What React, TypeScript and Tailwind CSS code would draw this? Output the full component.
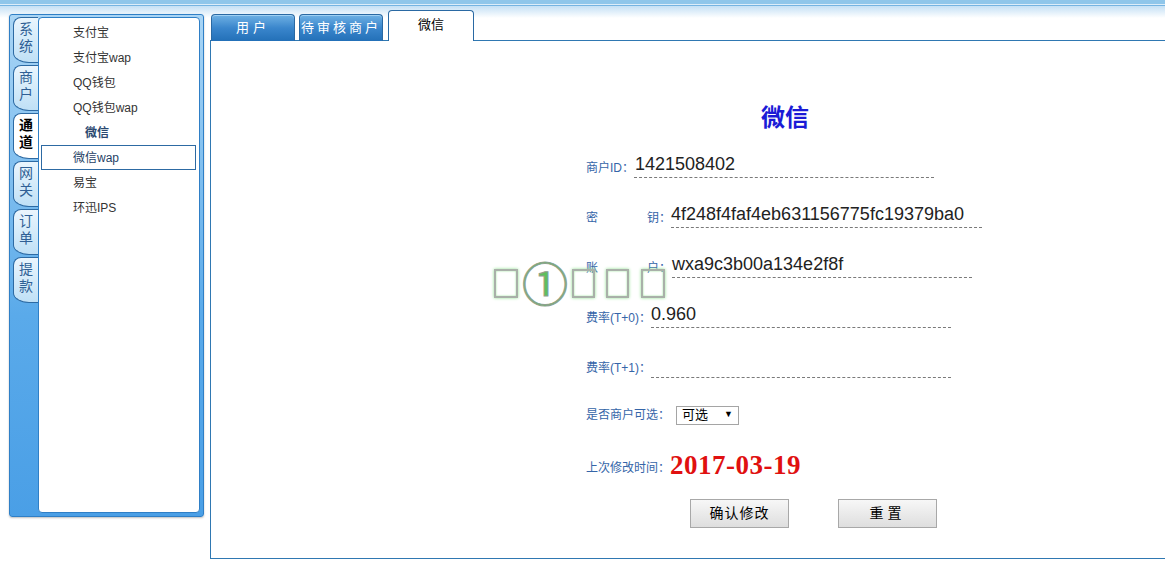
import React from 'react';

const sideTabs = [
  { id: 'xt', chars: ['系', '统'] },
  { id: 'sh', chars: ['商', '户'] },
  { id: 'td', chars: ['通', '道'], active: true },
  { id: 'wg', chars: ['网', '关'] },
  { id: 'dd', chars: ['订', '单'] },
  { id: 'tk', chars: ['提', '款'] },
];

const menu = [
  { id: 'alipay', label: '支付宝' },
  { id: 'alipaywap', label: '支付宝wap' },
  { id: 'qq', label: 'QQ钱包' },
  { id: 'qqwap', label: 'QQ钱包wap' },
  { id: 'wx', label: '微信', current: true },
  { id: 'wxwap', label: '微信wap', selected: true },
  { id: 'yb', label: '易宝' },
  { id: 'ips', label: '环迅IPS' },
];

const font = { fontFamily: '"Liberation Sans", "Noto Sans CJK SC", sans-serif' };

const SideTab: React.FC<{ chars: string[]; active?: boolean }> = ({ chars, active }) => (
  <div
    className={
      'ml-[3px] w-[25px] h-[46px] flex flex-col items-center pt-[3px] border-l border-t border-b border-[#2d6aa3] rounded-tl-[8px] rounded-bl-[16px_10px] ' +
      (active
        ? 'bg-white text-black font-bold'
        : 'bg-[linear-gradient(to_bottom,#eaf5fd,#bfe0f6)] text-[#2f5f95]')
    }
  >
    {chars.map((c) => (
      <span key={c} className="text-[14px] leading-[17px]">
        {c}
      </span>
    ))}
  </div>
);

const LeftPanel: React.FC = () => (
  <div className="ml-[9px] mt-[14px] w-[195px] h-[503px] border border-[#2f7fc6] rounded-[3px] flex bg-[linear-gradient(to_bottom,#a9d5f5,#5aaaea_60%,#4a9fe6)] shadow-[0_1px_2px_rgba(0,0,0,0.25)]">
    <div className="w-[28px] pt-[2px] flex flex-col gap-[2px]">
      {sideTabs.map((t) => (
        <SideTab key={t.id} chars={t.chars} active={t.active} />
      ))}
    </div>
    <div className="mt-[2px] mb-[3px] mr-[3px] flex-1 bg-white border border-[#2f7fc6] rounded-[4px] pt-[2px] pl-[2px] pr-[3px]">
      {menu.map((m) => (
        <div
          key={m.id}
          className={
            'h-[25px] flex items-center text-[12px] ' +
            (m.selected ? 'border border-[#2d6aa3] h-[24px] pl-[31px] text-[#1f3f66]' : 'pl-[32px] ') +
            (m.current ? 'pl-[44px] font-bold text-[#2a4870]' : '') +
            (!m.selected && !m.current ? 'text-[#333]' : '')
          }
        >
          {m.label}
        </div>
      ))}
    </div>
  </div>
);

const FieldRow: React.FC<{ label: React.ReactNode; value?: string; boxClass: string }> = ({
  label,
  value,
  boxClass,
}) => (
  <div className="flex items-center h-[22px] mt-[28px]">
    <div className="text-[12px] text-[#3565a8] whitespace-pre flex mt-[1px]">{label}</div>
    <div className={'h-[22px] border-b border-dashed border-[#7a7a7a] text-[18px] leading-[17px] text-[#222] ' + boxClass}>
      {value}
    </div>
  </div>
);

const box = 'h-[29px] border-2 border-[#a9b0a9] shadow-[0_0_3px_#8fe08f,inset_0_0_2px_#8fe08f]';

const Watermark: React.FC = () => (
  <div className="absolute left-[283px] top-[226px] flex items-center pointer-events-none">
    <span className={'w-[24px] ' + box} />
    <span
      className="ml-[9px] w-[36px] flex justify-center text-[46px] leading-[36px] text-[#5cc05c] -mt-[4px]"
      style={{ fontFamily: '"Noto Sans CJK SC", serif', WebkitTextStroke: '1px #8fa08f' }}
    >
      ①
    </span>
    <span className={'ml-[9px] w-[23px] ' + box} />
    <span className={'ml-[11px] w-[23px] ' + box} />
    <span className={'ml-[12px] w-[24px] ' + box} />
  </div>
);

const MainPanel: React.FC = () => (
  <div className="ml-[6px] mt-[10px] flex-1 flex flex-col">
    <div className="flex items-end h-[31px] -mb-px relative z-10">
      <div className="ml-px w-[84px] h-[27px] rounded-t-[4px] border border-b-0 border-[#2a69a3] bg-[linear-gradient(to_bottom,#6fb1e4,#3a86cc_50%,#2370b8)] text-white text-[13px] tracking-[4px] flex items-center justify-center shadow-[inset_0_1px_0_#9fd0f3]">
        用户
      </div>
      <div className="ml-[4px] w-[84px] h-[27px] rounded-t-[4px] border border-b-0 border-[#2a69a3] bg-[linear-gradient(to_bottom,#6fb1e4,#3a86cc_50%,#2370b8)] text-white text-[13px] tracking-[3px] flex items-center justify-center shadow-[inset_0_1px_0_#9fd0f3]">
        待审核商户
      </div>
      <div className="ml-[5px] w-[86px] h-[31px] rounded-t-[4px] border border-b-0 border-[#2a69a3] bg-white text-black text-[13px] flex items-center justify-center pb-[3px]">
        微信
      </div>
    </div>
    <div className="relative h-[519px] border-l border-t border-b border-[#2f78b2] bg-white">
      <Watermark />
      <div className="pl-[550px] pt-[58px]">
        <div className="text-[24px] leading-[34px] font-bold text-[#1b1bd6]" style={{ fontFamily: '"Noto Sans CJK SC", sans-serif' }}>
          微信
        </div>
      </div>
      <div className="pl-[375px] flex flex-col">
        <div className="mt-[-5px]" />
        <FieldRow label="商户ID：" value="1421508402" boxClass="w-[300px] pl-[1px]" />
        <FieldRow
          label={
            <>
              <span className="w-[61px]">密</span>
              <span>钥：</span>
            </>
          }
          value="4f248f4faf4eb631156775fc19379ba0"
          boxClass="w-[311px]"
        />
        <FieldRow
          label={
            <>
              <span className="w-[61px]">账</span>
              <span>户：</span>
            </>
          }
          value="wxa9c3b00a134e2f8f"
          boxClass="w-[300px] ml-[1px]"
        />
        <FieldRow label="费率(T+0)：" value="0.960" boxClass="w-[300px]" />
        <FieldRow label="费率(T+1)：" boxClass="w-[300px]" />
        <div className="flex items-center mt-[27px] h-[20px]">
          <span className="text-[12px] text-[#3565a8]">是否商户可选：</span>
          <div className="ml-[6px] w-[63px] h-[19px] border border-[#a5a5a5] flex items-center justify-between pl-[5px] pr-[5px] text-[13px] text-black">
            <span>可选</span>
            <span className="text-[9px]">▼</span>
          </div>
        </div>
        <div className="flex items-center mt-[25px] h-[30px]">
          <span className="text-[12px] text-[#3565a8] mt-[6px]">上次修改时间：</span>
          <span
            className="text-[27px] font-bold text-[#e01010] leading-[30px] tracking-[0.5px]"
            style={{ fontFamily: '"Liberation Serif", serif' }}
          >
            2017-03-19
          </span>
        </div>
      </div>
      <div className="pl-[479px] mt-[19px] flex gap-[49px]">
        <button className="w-[99px] h-[29px] border border-[#a8a8a8] bg-[linear-gradient(to_bottom,#f7f7f7,#dedede)] text-[14px] text-black tracking-[1px]">
          确认修改
        </button>
        <button className="w-[99px] h-[29px] border border-[#a8a8a8] bg-[linear-gradient(to_bottom,#f7f7f7,#dedede)] text-[14px] text-black tracking-[4px]">
          重置
        </button>
      </div>
    </div>
  </div>
);

export default function App() {
  return (
    <div
      className="w-[1165px] h-[563px] overflow-hidden flex bg-[linear-gradient(to_bottom,#8fc6ea_0px,#8fc6ea_4px,#dcedf9_4px,#dcedf9_5px,#75b4e2_5px,#75b4e2_6px,#c4e0f5_6px,#ffffff_18px)]"
      style={font}
    >
      <LeftPanel />
      <MainPanel />
    </div>
  );
}
